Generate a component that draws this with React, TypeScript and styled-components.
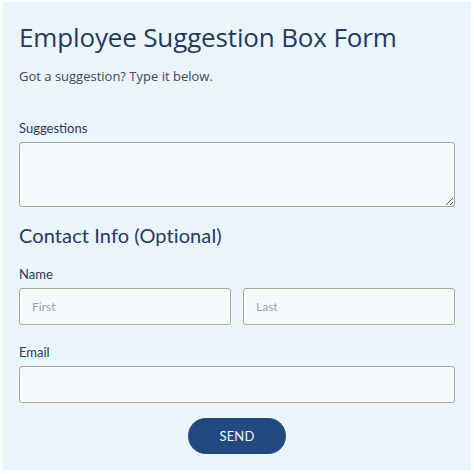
import styled, { createGlobalStyle } from 'styled-components';

const GlobalStyle = createGlobalStyle`
  html, body {
    margin: 0;
    padding: 0;
    background: #ffffff;
  }
  * {
    box-sizing: border-box;
  }
`;

const S_Page = styled.div`
  width: 474px;
  height: 474px;
  padding: 2px 3px 4px 3px;
`;

const S_Panel = styled.form`
  height: 100%;
  background: #ebf5fc;
  padding: 18px 16px 0 16px;
  display: flex;
  flex-direction: column;
`;

const S_Title = styled.h1`
  margin: 0;
  font-family: 'Open Sans', 'Noto Sans', sans-serif;
  font-weight: 400;
  font-size: 26px;
  line-height: 34px;
  color: #253a5e;
  letter-spacing: -0.15px;
`;

const S_Subtitle = styled.p`
  margin: 13px 0 0 0;
  font-family: 'Open Sans', 'Noto Sans', sans-serif;
  font-size: 13px;
  line-height: 18px;
  color: #3d4a60;
`;

const S_Label = styled.label<{ $top: number }>`
  display: block;
  margin-top: ${(p) => p.$top}px;
  margin-bottom: 6px;
  font-family: 'Lato', 'Noto Sans', sans-serif;
  font-size: 13px;
  line-height: 16px;
  color: #2b3a55;
`;

const S_TextArea = styled.textarea`
  display: block;
  width: 100%;
  height: 65px;
  background: #f5faff;
  border: 1px solid #b2a887;
  border-radius: 3px;
  resize: vertical;
  font-family: 'Lato', sans-serif;
  margin: 0;
`;

const S_Heading = styled.h2`
  margin: 16px 0 0 0;
  font-family: 'Lato', 'Noto Sans', sans-serif;
  font-weight: 400;
  font-size: 20px;
  line-height: 24px;
  color: #253a5e;
  letter-spacing: 0.1px;
`;

const S_Row = styled.div`
  display: grid;
  grid-template-columns: 1fr 1fr;
  gap: 12px;
`;

const S_Input = styled.input`
  display: block;
  width: 100%;
  height: 37px;
  padding: 0 12px;
  background: #f5faff;
  border: 1px solid #b2a887;
  border-radius: 3px;
  font-family: 'Lato', 'Noto Sans', sans-serif;
  font-size: 12px;
  color: #333;
  margin: 0;

  &::placeholder {
    color: #9a9fa6;
  }
`;

const S_Actions = styled.div`
  display: flex;
  justify-content: center;
  margin-top: 15px;
`;

const S_Button = styled.button`
  width: 98px;
  height: 36px;
  border: none;
  border-radius: 18px;
  background: #234a80;
  color: #f2f6fb;
  font-family: 'Lato', 'Noto Sans', sans-serif;
  font-size: 13px;
  letter-spacing: 0.2px;
  cursor: pointer;
`;

const App = () => {
  return (
    <>
      <GlobalStyle />
      <S_Page>
        <S_Panel onSubmit={(e) => e.preventDefault()}>
          <S_Title>Employee Suggestion Box Form</S_Title>
          <S_Subtitle>Got a suggestion? Type it below.</S_Subtitle>

          <S_Label $top={35}>Suggestions</S_Label>
          <S_TextArea />

          <S_Heading>Contact Info (Optional)</S_Heading>

          <S_Label $top={19}>Name</S_Label>
          <S_Row>
            <S_Input placeholder="First" />
            <S_Input placeholder="Last" />
          </S_Row>

          <S_Label $top={19}>Email</S_Label>
          <S_Input />

          <S_Actions>
            <S_Button type="submit">SEND</S_Button>
          </S_Actions>
        </S_Panel>
      </S_Page>
    </>
  );
};

export default App;
